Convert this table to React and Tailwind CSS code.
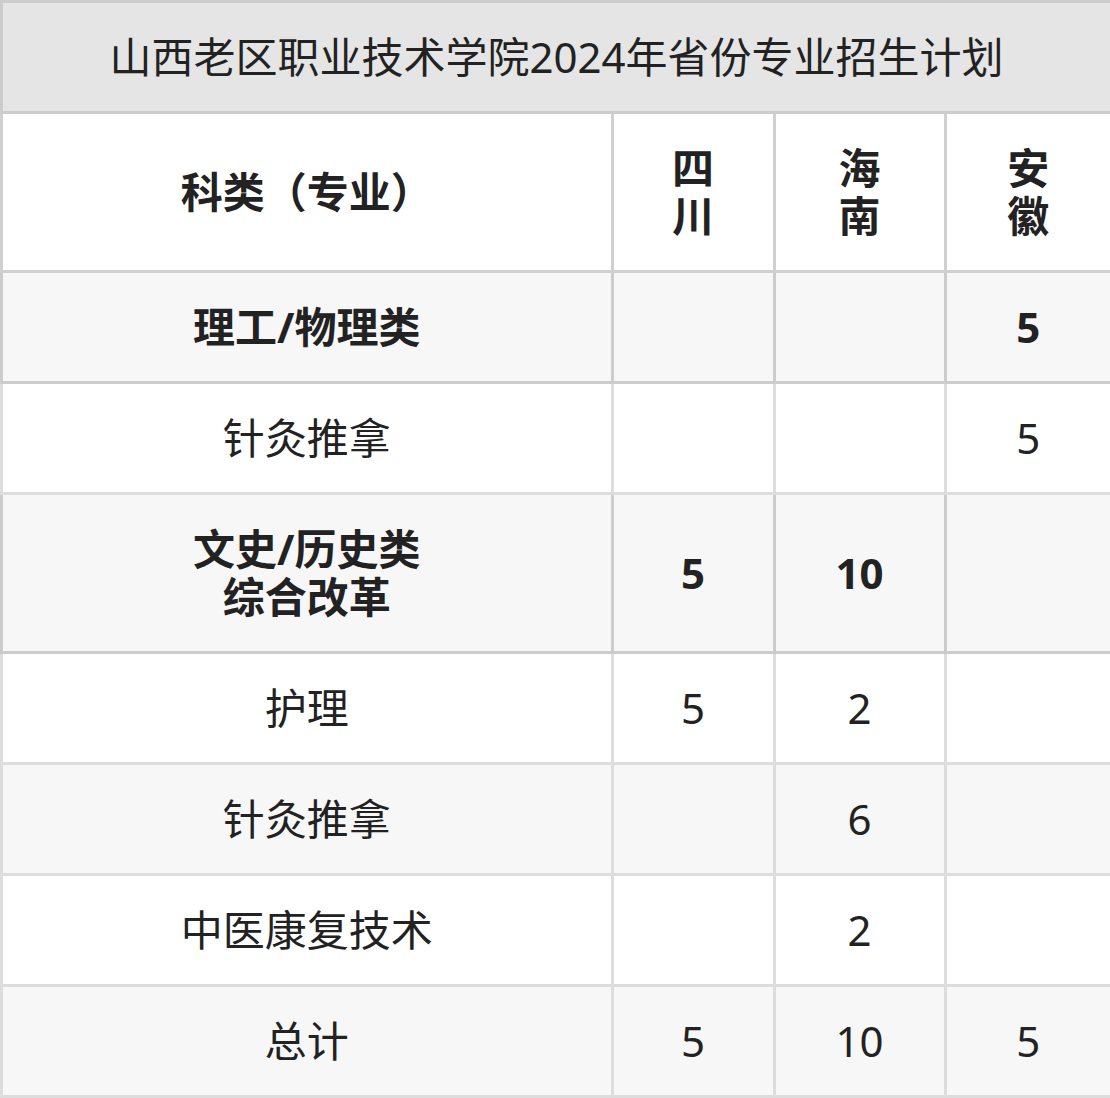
import React from 'react';

const rows = [
  { name: '理工/物理类', vals: ['', '', '5'], bold: true },
  { name: '针灸推拿', vals: ['', '', '5'] },
  { name: ['文史/历史类', '综合改革'], vals: ['5', '10', ''], bold: true },
  { name: '护理', vals: ['5', '2', ''] },
  { name: '针灸推拿', vals: ['', '6', ''] },
  { name: '中医康复技术', vals: ['', '2', ''] },
  { name: '总计', vals: ['5', '10', '5'] },
];

const font = { fontFamily: '"Noto Sans", "Noto Sans CJK SC", sans-serif' };

export default function App() {
  return (
    <div className="w-[1110px] bg-white text-[#222222]" style={font}>
      <table className="w-[1110px] table-fixed border-collapse text-center text-[42px] leading-[48px]">
        <colgroup>
          <col className="w-[610.5px]" />
          <col className="w-[162px]" />
          <col className="w-[171px]" />
          <col className="w-[166.5px]" />
        </colgroup>
        <tbody>
          <tr className="h-[111px]">
            <td colSpan={4} className="border-[3px] border-[#cccccc] bg-[#e5e5e5] p-0 align-middle">
              山西老区职业技术学院2024年省份专业招生计划
            </td>
          </tr>
          <tr className="h-[159px] font-bold">
            <td className="border-[3px] border-[#d0d0d0] bg-white p-0">科类（专业）</td>
            <td className="border-[3px] border-[#d0d0d0] bg-white p-0">四<br />川</td>
            <td className="border-[3px] border-[#d0d0d0] bg-white p-0">海<br />南</td>
            <td className="border-[3px] border-[#d0d0d0] bg-white p-0">安<br />徽</td>
          </tr>
          {rows.map((r, i) => {
            const tall = Array.isArray(r.name);
            const cell = `border-[3px] p-0 ${r.bold ? 'border-[#cccccc]' : 'border-[#dddddd]'} ${i % 2 === 0 ? 'bg-[#f7f7f7]' : 'bg-white'}`;
            return (
              <tr key={i} className={`${tall ? 'h-[159px]' : 'h-[111px]'} ${r.bold ? 'font-bold' : 'font-normal'}`}>
                <td className={cell}>
                  {tall ? (<>{r.name[0]}<br />{r.name[1]}</>) : r.name}
                </td>
                {r.vals.map((v, j) => (
                  <td key={j} className={cell}>{v}</td>
                ))}
              </tr>
            );
          })}
        </tbody>
      </table>
    </div>
  );
}
